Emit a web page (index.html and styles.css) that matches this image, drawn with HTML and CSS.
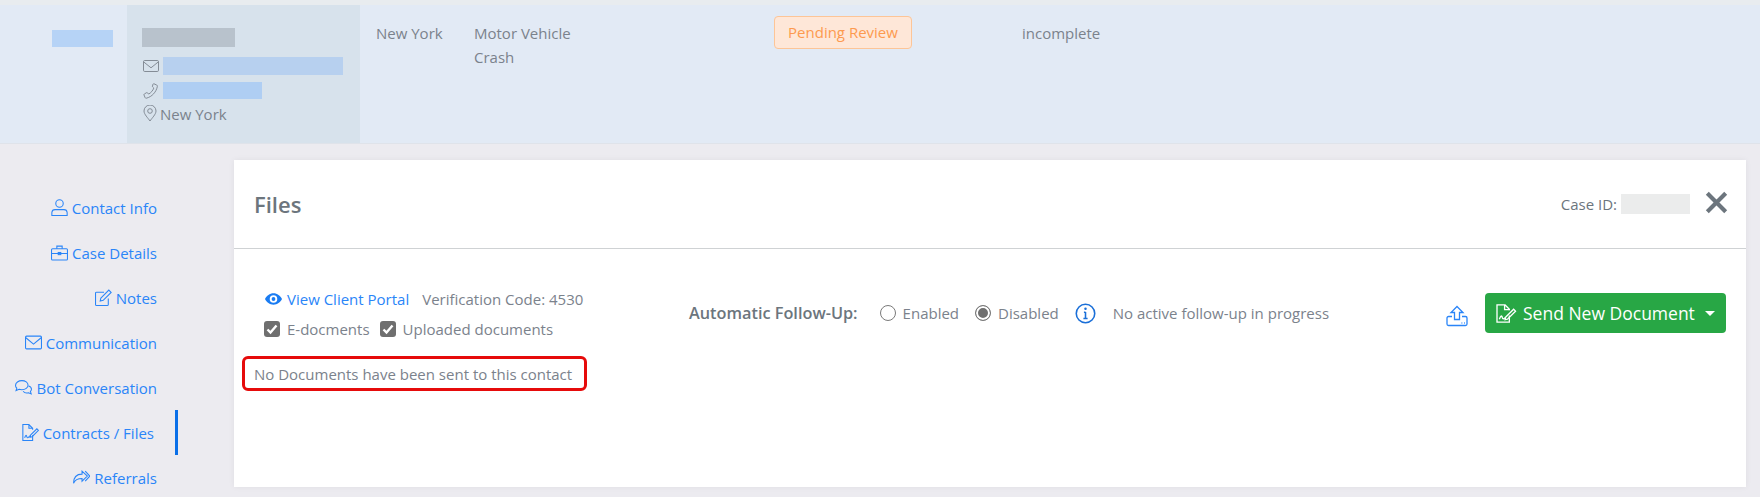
FILE: index.html
```html
<!DOCTYPE html>
<html lang="en">
<head>
    <meta charset="UTF-8">
    <title>Files</title>
    <link rel="stylesheet" href="styles.css">
</head>
<body>
    <header class="summary">
        <div class="col-id"><span class="mask mask-id"></span></div>
        <div class="col-contact">
            <span class="mask mask-name"></span>
            <div class="contact-line">
                <svg class="icon-sm" viewBox="0 0 16 16"><rect x="0.500" y="2.500" width="15" height="11" rx="1.200"/><path d="M.8 4 8 9.800 15.200 4"/></svg>
                <span class="mask mask-email"></span>
            </div>
            <div class="contact-line">
                <svg class="icon-sm" viewBox="0 0 16 16"><path d="M11 .8l2.800 1.300c.5.300.7.700.6 1.200C13.300 9 9 13.800 3.300 15.200c-.5.100-1-.1-1.200-.6L1 12c-.2-.4 0-.8.300-1l2.200-1.300c.4-.2.800-.2 1 .1l1.100 1.300c2.400-1.300 4.300-3.600 5.200-6L9.700 4c-.3-.3-.3-.7-.2-1L10 1.200c.2-.4.600-.6 1-.4z"/></svg>
                <span class="mask mask-phone"></span>
            </div>
            <div class="contact-line contact-place">
                <svg class="icon-pin" viewBox="0 0 14 17"><path d="M7 16C5 13 1 9.300 1 6a6 6 0 0 1 12 0C13 9.300 9 13 7 16z"/><circle cx="7" cy="6" r="2.300"/></svg>
                <span>New York</span>
            </div>
        </div>
        <div class="col-state">New York</div>
        <div class="col-type">Motor Vehicle Crash</div>
        <div class="col-status"><span class="badge-pending">Pending Review</span></div>
        <div class="col-progress">incomplete</div>
    </header>

    <main class="page">
        <nav class="sidenav">
            <a class="nav-item" href="#">
                <svg class="icon" viewBox="0 0 16 16"><circle cx="8" cy="4.200" r="3.500"/><path d="M.8 15.500v-2.800a3 3 0 0 1 3-2.700h8.400a3 3 0 0 1 3 2.700v2.800z"/></svg>
                Contact Info
            </a>
            <a class="nav-item" href="#">
                <svg class="icon" viewBox="0 0 16 16"><rect x=".5" y="4.500" width="15" height="10.500" rx="1"/><path d="M5.500 4.500V2h5v2.500M.5 9h15"/><rect x="6.800" y="8" width="2.400" height="2"/></svg>
                Case Details
            </a>
            <a class="nav-item" href="#">
                <svg class="icon" viewBox="0 0 16 16"><path d="M12.500 9v5.500a1 1 0 0 1-1 1h-10a1 1 0 0 1-1-1V4a1 1 0 0 1 1-1h7"/><path d="M5.500 8.500 13 1l2.200 2.200-7.500 7.500-2.800.6z"/></svg>
                Notes
            </a>
            <a class="nav-item" href="#">
                <svg class="icon" viewBox="0 0 16 16"><rect x=".5" y="2" width="15" height="12" rx="1"/><path d="M.8 3.500 8 9.500 15.200 3.500"/></svg>
                Communication
            </a>
            <a class="nav-item" href="#">
                <svg class="icon" viewBox="0 0 16 16"><path d="M6.500 1.500C3.300 1.500.5 3.400.5 6c0 1 .5 1.900 1.200 2.600L1 10.800l2.800-1.100c.8.300 1.700.4 2.700.4 3.200 0 5.800-1.800 5.800-4.300s-2.600-4.300-5.800-4.300z"/><path d="M12.800 6.500c1.600.5 2.700 1.700 2.700 3.100 0 .8-.4 1.500-1 2.100l.7 2.300-2.500-1.100c-1.900.5-4 0-5-1.400"/></svg>
                Bot Conversation
            </a>
            <a class="nav-item nav-item-active" href="#">
                <svg class="icon" viewBox="0 0 16 16"><path d="M10 10.500V15.500H.8V.5h5.700L10 4v1.500M6.500.5V4H10"/><path d="M2.500 13c1-2.800 1.500-2.800 2-1.200s1 1.500 2 .2 1-.6 2-.2"/><path d="M8 10.500 14 4.500l1.500 1.500-6 6-2 .5z"/></svg>
                Contracts / Files
            </a>
            <a class="nav-item" href="#">
                <svg class="icon" viewBox="0 0 16 16"><path d="M8.500 2v2.800C4 4.800.5 7 .5 13.500c1.500-3.500 4-4.500 8-4.500V11.500l5-4.800z"/><path d="M11.500 2l4.300 4.700-4.300 4.800"/></svg>
                Referrals
            </a>
        </nav>

        <section class="card">
            <div class="card-head">
                <h2 class="card-title">Files</h2>
                <div class="case-id">Case ID: <span class="mask mask-case"></span></div>
                <svg class="close" viewBox="0 0 20 20"><path d="M2 2l16 16M18 2 2 18"/></svg>
            </div>
            <div class="card-body">
                <div class="docs">
                    <div class="portal-row">
                        <a class="portal-link" href="#">
                            <svg class="icon-eye" viewBox="0 0 18 12"><path fill-rule="evenodd" d="M9 0c4 0 7.300 2.700 9 6-1.700 3.300-5 6-9 6S1.700 9.300 0 6c1.700-3.300 5-6 9-6zm0 2a4 4 0 1 0 0 8 4 4 0 0 0 0-8zm0 2a2 2 0 1 1 0 4 2 2 0 0 1 0-4z"/></svg>
                            View Client Portal
                        </a>
                        <span>Verification Code: 4530</span>
                    </div>
                    <div class="filter-row">
                        <label class="check"><span class="checkbox"><svg viewBox="0 0 16 16"><path d="M3.500 8.500l3 3 6-7"/></svg></span>E-docments</label>
                        <label class="check"><span class="checkbox"><svg viewBox="0 0 16 16"><path d="M3.500 8.500l3 3 6-7"/></svg></span>Uploaded documents</label>
                    </div>
                    <div class="empty-note">No Documents have been sent to this contact</div>
                </div>
                <div class="followup">
                    <strong class="followup-label">Automatic Follow-Up:</strong>
                    <label class="radio"><span class="radio-dot"></span>Enabled</label>
                    <label class="radio"><span class="radio-dot radio-dot-on"></span>Disabled</label>
                    <svg class="icon-info" viewBox="0 0 20 20"><circle cx="10" cy="10" r="8.800"/><path d="M10 8.500v6M8 14.800h4M8.500 8.800H10"/><circle class="info-dot" cx="10" cy="5.500" r="1.200"/></svg>
                    <span>No active follow-up in progress</span>
                </div>
                <div class="actions">
                    <svg class="icon-upload" viewBox="0 0 22 22"><path d="M11 1.500l6 6h-3.500v7h-5v-7H5z"/><path d="M6 11.500H2.500a1.500 1.500 0 0 0-1.500 1.500v6a1.500 1.500 0 0 0 1.500 1.500h17a1.500 1.500 0 0 0 1.500-1.500v-6a1.500 1.500 0 0 0-1.500-1.500H16"/><path d="M15.500 18h.8M18 18h.8"/></svg>
                    <button class="btn-send" type="button">
                        <svg class="icon-doc" viewBox="0 0 22 20"><path d="M14 12v7H1V1h8.500L14 5.500v1"/><path d="M9 1v5h5"/><path d="M3.500 16c1.500-4 2.500-4 3-2s1.500 2 3 .5"/><path d="M10 14l8.500-8.500 2 2L12 16l-2.500.5z"/></svg>
                        Send New Document
                        <span class="caret"></span>
                    </button>
                </div>
            </div>
        </section>
    </main>
</body>
</html>
```

FILE: styles.css
```css
* {
    box-sizing: border-box;
}
body {
    font-family: "Open Sans", "Noto Sans", Arial, sans-serif;
    font-size: 15px;
    line-height: 24px;
    margin: 0;
    height: 497px;
    overflow: hidden;
    background-color: #ecebf0;
    color: #7b828c;
}
svg {
    fill: none;
    stroke: currentColor;
    flex-shrink: 0;
}
.mask {
    display: inline-block;
}

/* top summary row */
.summary {
    display: flex;
    height: 144px;
    border-top: 5px solid #e8ecef;
    border-bottom: 1px solid #dfe3ea;
    background: #e2eaf5;
}
.col-id {
    width: 127px;
    padding: 25px 0 0 52px;
}
.mask-id {
    display: block;
    width: 61px;
    height: 17px;
    background: #b6d3f6;
}
.col-contact {
    width: 233px;
    padding: 23px 0 0 15px;
    background: #d7e2ec;
}
.mask-name {
    display: block;
    width: 93px;
    height: 19px;
    margin-bottom: 6px;
    background: #b8c2cc;
}
.contact-line {
    display: flex;
    align-items: center;
    gap: 4px;
    height: 25px;
    padding-left: 1px;
}
.contact-place {
    gap: 3px;
    margin-top: -2px;
}
.icon-sm {
    width: 16px;
    height: 16px;
    stroke-width: 0.9;
}
.icon-pin {
    width: 14px;
    height: 17px;
    stroke-width: 0.9;
}
.mask-email {
    width: 180px;
    height: 18px;
    background: #b7d0ef;
}
.mask-phone {
    width: 99px;
    height: 17px;
    background: #afcef3;
}
.col-state {
    width: 114px;
    padding: 16px 0 0 16px;
}
.col-type {
    width: 300px;
    padding: 16px 190px 0 0;
}
.col-status {
    width: 248px;
    padding: 11px 0 0 0;
}
.badge-pending {
    display: inline-block;
    width: 138px;
    height: 33px;
    line-height: 31px;
    text-align: center;
    color: #fd9a4f;
    background: #fee7d8;
    border: 1px solid #fdc597;
    border-radius: 4px;
}
.col-progress {
    padding-top: 16px;
}

/* lower part */
.page {
    display: flex;
    height: 353px;
}
.sidenav {
    width: 234px;
    padding-top: 41px;
    padding-right: 77px;
}
.nav-item {
    position: relative;
    display: flex;
    justify-content: flex-end;
    align-items: center;
    gap: 4px;
    height: 45px;
    white-space: nowrap;
    color: #2a85f8;
    text-decoration: none;
}
.nav-item-active {
    padding-right: 3px;
}
.nav-item-active::after {
    content: "";
    position: absolute;
    right: -21px;
    top: 0;
    width: 3px;
    height: 45px;
    background: #0a6fe8;
}
.icon {
    width: 17px;
    height: 17px;
    stroke-width: 1;
}
.card {
    width: 1512px;
    height: 327px;
    margin-top: 16px;
    background: #fff;
    box-shadow: 0 0 6px rgba(0, 0, 0, 0.06);
}
.card-head {
    display: flex;
    align-items: center;
    height: 89px;
    padding: 0 18px 0 20px;
    border-bottom: 1px solid #cfd2d4;
}
.card-title {
    flex: 1;
    margin: 0;
    font-size: 22px;
    font-weight: 600;
    color: #6c757d;
}
.case-id {
    display: flex;
    align-items: center;
    gap: 4px;
    color: #6c757d;
}
.mask-case {
    width: 69px;
    height: 20px;
    background: #ebecec;
}
.close {
    width: 23px;
    height: 23px;
    margin: 0 0 3px 15px;
    color: #6c757d;
    stroke-width: 3.6;
}
.card-body {
    display: flex;
    align-items: flex-start;
    padding: 35px 20px 0 20px;
}
.docs {
    width: 435px;
    flex-shrink: 0;
}
.portal-row {
    display: flex;
    align-items: center;
    gap: 13px;
    padding-left: 11px;
    height: 29px;
    white-space: nowrap;
}
.portal-link {
    display: flex;
    align-items: center;
    gap: 5px;
    color: #2a85f8;
    text-decoration: none;
}
.icon-eye {
    width: 17px;
    height: 12px;
    fill: #1a7cf2;
    stroke: none;
}
.filter-row {
    display: flex;
    gap: 10px;
    padding-left: 10px;
    height: 32px;
    align-items: center;
}
.check {
    display: flex;
    align-items: center;
    gap: 7px;
}
.checkbox {
    display: flex;
    width: 16px;
    height: 16px;
    background: #6f6f6f;
    border-radius: 3px;
}
.checkbox svg {
    color: #fff;
    stroke-width: 2.4;
}
.empty-note {
    width: 345px;
    height: 35px;
    margin: 11px 0 0 -12px;
    padding: 1px 0 0 9px;
    line-height: 29px;
    white-space: nowrap;
    border: 3px solid #e60b0b;
    border-radius: 6px;
}
.followup {
    display: flex;
    align-items: center;
    height: 28px;
    margin-top: 15px;
    flex: 1;
    white-space: nowrap;
}
.followup-label {
    font-size: 16.3px;
    font-weight: 600;
    color: #6c757d;
    margin-right: 22px;
}
.radio {
    display: flex;
    align-items: center;
    gap: 7px;
    margin-right: 16px;
}
.radio-dot {
    width: 16px;
    height: 16px;
    border: 1.5px solid #7a7a7a;
    border-radius: 50%;
    background: #fff;
}
.radio-dot-on {
    background: #6f6f6f;
    box-shadow: inset 0 0 0 2px #fff;
}
.icon-info {
    width: 21px;
    height: 21px;
    margin-right: 17px;
    color: #1a6fd8;
    stroke-width: 1.5;
}
.info-dot {
    fill: #1a6fd8;
    stroke: none;
}
.actions {
    display: flex;
    align-items: center;
    gap: 17px;
    margin-top: 9px;
}
.icon-upload {
    width: 22px;
    height: 22px;
    margin-top: 5px;
    color: #2a85f8;
    stroke-width: 1.3;
}
.btn-send {
    display: flex;
    align-items: center;
    gap: 6px;
    width: 241px;
    height: 40px;
    padding: 0 11px;
    font-family: inherit;
    font-size: 17.5px;
    white-space: nowrap;
    color: #fff;
    background: #28a745;
    border: none;
    border-radius: 4px;
}
.icon-doc {
    width: 21px;
    height: 19px;
    stroke-width: 1.4;
}
.caret {
    width: 0;
    height: 0;
    margin-left: 4px;
    border-top: 5px solid #fff;
    border-left: 5px solid transparent;
    border-right: 5px solid transparent;
}
```
